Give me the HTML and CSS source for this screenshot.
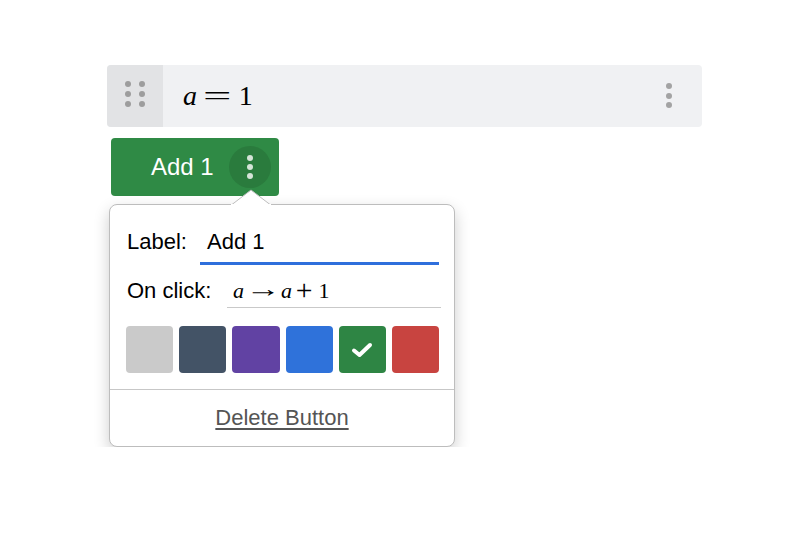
FILE: index.html
```html
<!DOCTYPE html>
<html lang="en">
<head>
  <meta charset="UTF-8">
  <title>Button editor</title>
  <meta name="viewport" content="width=device-width, initial-scale=1.0" />
  <link rel="stylesheet" href="styles.css">
</head>
<body>
  <div class="page">
    <!-- Expression row -->
    <div class="expr">
      <div class="handle">
        <svg width="20" height="26" viewBox="0 0 20 26">
          <circle cx="3" cy="3" r="3"/><circle cx="17" cy="3" r="3"/>
          <circle cx="3" cy="13" r="3"/><circle cx="17" cy="13" r="3"/>
          <circle cx="3" cy="23" r="3"/><circle cx="17" cy="23" r="3"/>
        </svg>
      </div>
      <div class="expr-math"><i>a</i><span class="eq">=</span>1</div>
      <div class="expr-menu">
        <svg width="8" height="26" viewBox="0 0 8 26">
          <circle cx="4" cy="3" r="3"/><circle cx="4" cy="13" r="3"/><circle cx="4" cy="22" r="3"/>
        </svg>
      </div>
    </div>

    <!-- Button -->
    <div class="action-btn">
      <span class="action-label">Add 1</span>
      <span class="action-menu">
        <svg width="8" height="24" viewBox="0 0 8 24">
          <circle cx="4" cy="3" r="3"/><circle cx="4" cy="12" r="3"/><circle cx="4" cy="21" r="3"/>
        </svg>
      </span>
    </div>

    <!-- Popup -->
    <div class="popup">
      <svg class="popup-arrow" width="40" height="16" viewBox="0 0 40 16">
        <polygon points="1,15.5 20,1 39,15.5" fill="#fff" stroke="#bdbdbd" stroke-width="1"/>
        <rect x="0" y="15" width="40" height="2" fill="#fff"/>
      </svg>
      <div class="fields">
        <div class="field">
          <span class="field-name label-name">Label:</span>
          <span class="field-input active">Add 1</span>
        </div>
        <div class="field">
          <span class="field-name click-name">On click:</span>
          <span class="field-input math"><i>a</i><span class="arrow">→</span><i>a</i><span class="plus">+</span>1</span>
        </div>
        <div class="swatches">
          <div class="swatch" style="background:#cacaca"></div>
          <div class="swatch" style="background:#435366"></div>
          <div class="swatch" style="background:#6142a3"></div>
          <div class="swatch" style="background:#2f72da"></div>
          <div class="swatch selected" style="background:#2e8544">
            <svg width="22" height="16" viewBox="0 0 22 16">
              <polyline points="3,8.5 8.5,13 19,3" fill="none" stroke="#fff" stroke-width="4" stroke-linecap="round" stroke-linejoin="round"/>
            </svg>
          </div>
          <div class="swatch" style="background:#c84440"></div>
        </div>
      </div>
      <div class="delete"><a href="#">Delete Button</a></div>
    </div>
  </div>
</body>
</html>
```

FILE: styles.css
```css
body {
  margin: 0;
  background: #fff;
  font-family: "Liberation Sans", Arial, sans-serif;
  color: #000;
}
.page {
  padding: 65px 0 0 107px;
}

/* Expression row */
.expr {
  display: flex;
  width: 595px;
  height: 62px;
  background: #f0f1f3;
  border-radius: 4px;
  overflow: hidden;
}
.handle {
  width: 56px;
  background: #e2e3e5;
  display: flex;
  align-items: center;
  justify-content: center;
}
.handle svg {
  fill: #9d9d9d;
  margin-top: -4px;
}
.expr-math {
  flex: 1;
  padding-left: 20px;
  font-family: "Liberation Serif", "Times New Roman", serif;
  font-size: 28px;
  line-height: 62px;
}
.eq {
  display: inline-block;
  margin: 0 20px 0 6px;
  transform: scaleX(1.8);
  transform-origin: left center;
}
.expr-menu {
  display: flex;
  align-items: center;
  padding-right: 29px;
}
.expr-menu svg {
  fill: #a3a3a3;
}

/* Button */
.action-btn {
  display: flex;
  align-items: center;
  width: 168px;
  height: 58px;
  margin: 11px 0 0 4px;
  padding-left: 40px;
  box-sizing: border-box;
  background: #2f8a45;
  border-radius: 4px;
  color: #fff;
  font-size: 24px;
}
.action-menu {
  margin-left: auto;
  margin-right: 8px;
  width: 42px;
  height: 42px;
  border-radius: 50%;
  background: #2a7b3d;
  display: flex;
  align-items: center;
  justify-content: center;
}
.action-menu svg {
  fill: #d5e4d8;
}

/* Popup */
.popup {
  position: relative;
  width: 346px;
  margin: 8px 0 0 2px;
  background: #fff;
  border: 1px solid #bdbdbd;
  border-radius: 8px;
  box-sizing: border-box;
  box-shadow: 0 6px 16px rgba(0,0,0,0.2);
}
.popup-arrow {
  position: absolute;
  left: 121px;
  top: -16px;
}
.fields {
  padding: 23px 15px 16px 16px;
  border-bottom: 1px solid #c7c7c7;
}
.field {
  display: flex;
  font-size: 22px;
  line-height: 28px;
  margin-bottom: 12px;
}
.field-name {
  padding-left: 1px;
}
.label-name {
  width: 73px;
}
.click-name {
  width: 100px;
}
.field-input {
  flex: 1;
  padding: 0 0 6px 7px;
  border-bottom: 3px solid #2f6fdc;
}
.field-input.math {
  padding: 0 0 2px 6px;
  margin-right: -2px;
  border-bottom: 1px solid #c9c9c9;
  font-family: "Liberation Serif", "Times New Roman", serif;
}
.arrow {
  display: inline-block;
  margin: 0 7px 0 8px;
  transform: translateY(-2px) scale(1.6, 1.1);
}
.plus {
  display: inline-block;
  margin: 0 8px 0 6px;
  transform: scale(1.35);
}
.swatches {
  display: grid;
  grid-template-columns: repeat(6, 1fr);
  gap: 6px;
  margin-top: 18px;
}
.swatch {
  height: 47px;
  border-radius: 4px;
  display: flex;
  align-items: center;
  justify-content: center;
}
.delete {
  height: 56px;
  display: flex;
  align-items: center;
  justify-content: center;
  font-size: 22px;
  line-height: 28px;
}
.delete a {
  color: #555;
  text-decoration: underline;
  text-underline-offset: 3px;
}
```
